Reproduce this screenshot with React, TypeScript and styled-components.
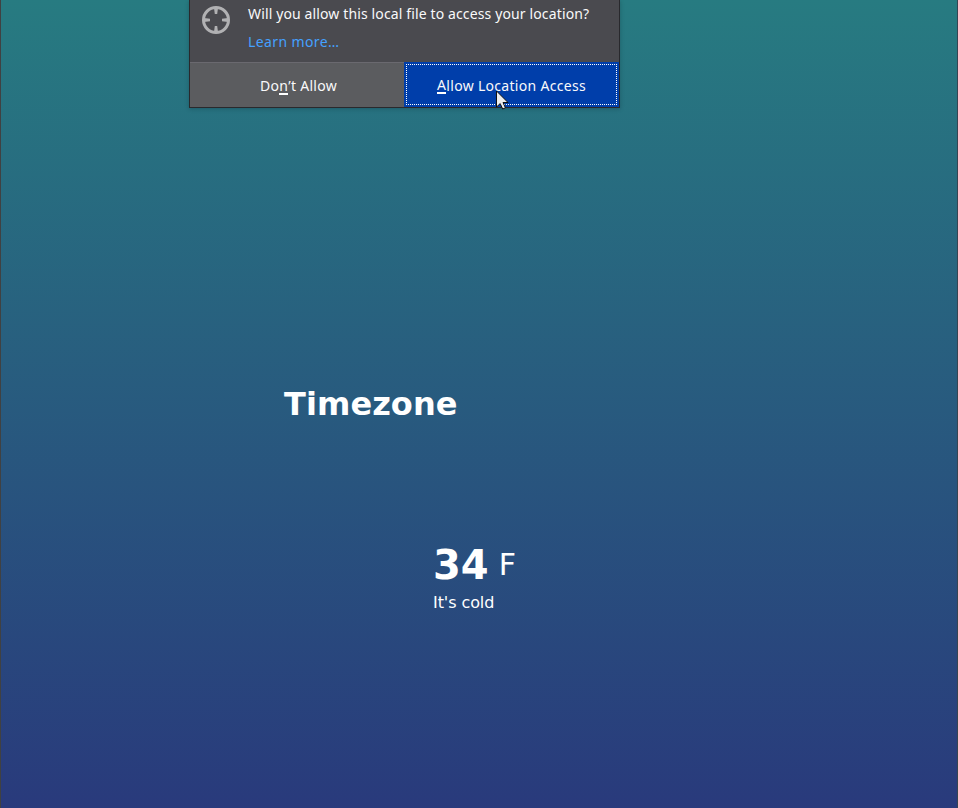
import React from "react";
import styled, { createGlobalStyle } from "styled-components";

const GlobalStyle = createGlobalStyle`
  * { box-sizing: border-box; }
  body { margin: 0; overflow: hidden; font-family: "DejaVu Sans", sans-serif; color: #fff; }
`;

const Page = styled.main`
  height: 808px;
  border-left: 1px solid #404142;
  border-right: 1px solid #354552;
  background: linear-gradient(#277b81, #293a7c);
`;

const Popup = styled.section`
  width: 431px;
  height: 108px;
  margin-left: 188px;
  border: 1px solid #29292d;
  border-top: 0;
  background: #4a4a4f;
  box-shadow: 0 1px 4px rgba(0, 20, 30, 0.25);
  font-family: "Noto Sans", sans-serif;
  font-size: 14px;
  color: #f9f9fa;
  display: flex;
  flex-direction: column;
`;

const Notice = styled.div`
  height: 62px;
  display: flex;
  padding-left: 12px;
  gap: 18px;
`;

const TargetIcon = styled.svg`
  width: 28px;
  height: 28px;
  margin-top: 6px;
  flex: none;
`;

const Message = styled.div`
  display: flex;
  flex-direction: column;
`;

const Line = styled.div<{ $spacing: number }>`
  height: 28px;
  line-height: 28px;
  white-space: nowrap;
  letter-spacing: ${(p) => p.$spacing}px;
`;

const LearnMore = styled(Line)`
  color: #45a1ff;
`;

const Actions = styled.div`
  height: 45px;
  display: grid;
  grid-template-columns: 214px 215px;
`;

const Button = styled.button<{ $primary?: boolean; $spacing: number }>`
  border: 0;
  border-top: 1px solid ${(p) => (p.$primary ? "#003eaa" : "#6a696f")};
  padding: ${(p) => (p.$primary ? "0 2px 1px" : "0 0 0 3px")};
  background: ${(p) => (p.$primary ? "#003eaa" : "#5b5c5f")};
  color: #f9f9fa;
  font: inherit;
  letter-spacing: ${(p) => p.$spacing}px;
  white-space: nowrap;
`;

const FocusRing = styled.span`
  display: flex;
  align-items: center;
  justify-content: center;
  height: 41px;
  padding-top: 2px;
  border: 1px dotted #fff;
`;

const AccessKey = styled.span`
  border-bottom: 2px solid #fff;
  display: inline-block;
  line-height: 15px;
  height: 17px;
`;

const Pointer = styled.svg`
  position: absolute;
  left: 496px;
  top: 90px;
  width: 14px;
  height: 20px;
`;

const Location = styled.div`
  height: 37px;
  margin: 278px 0 0 283px;
`;

const Timezone = styled.h1`
  margin: 0;
  font-size: 32px;
  line-height: 37px;
  letter-spacing: 0.08px;
`;

const Temperature = styled.div`
  margin: 118px 0 0 432px;
`;

const Degrees = styled.div`
  display: flex;
  align-items: center;
  gap: 10px;
  height: 47px;
`;

const Value = styled.h2`
  margin: 2px 0 0;
  font-size: 40px;
  line-height: 47px;
`;

const Unit = styled.span`
  font-size: 30px;
  line-height: 35px;
`;

const Description = styled.div`
  margin-top: 5px;
  font-size: 16px;
  line-height: 19px;
  letter-spacing: -0.08px;
`;

export default function App() {
  return (
    <>
      <GlobalStyle />
      <Page>
        <Popup>
          <Notice>
            <TargetIcon viewBox="0 0 28 28" fill="none" stroke="#b1b1b3" strokeWidth="3">
              <circle cx="14" cy="14" r="12.5" />
              <path
                d="M12 2h4l-.8 6h-2.4zM12 26h4l-.8-6h-2.4zM2 12v4l6-.8v-2.4zM26 12v4l-6-.8v-2.4z"
                fill="#b1b1b3"
                stroke="none"
              />
            </TargetIcon>
            <Message>
              <Line $spacing={0.13}>Will you allow this local file to access your location?</Line>
              <LearnMore $spacing={0.38}>Learn more…</LearnMore>
            </Message>
          </Notice>
          <Actions>
            <Button $spacing={0.28}>
              Do<AccessKey>n</AccessKey>’t Allow
            </Button>
            <Button $primary $spacing={0.3}>
              <FocusRing>
                <AccessKey>A</AccessKey>llow Location Access
              </FocusRing>
            </Button>
          </Actions>
        </Popup>
        <Location>
          <Timezone>Timezone</Timezone>
        </Location>
        <Temperature>
          <Degrees>
            <Value>34</Value>
            <Unit>F</Unit>
          </Degrees>
          <Description>It's cold</Description>
        </Temperature>
        <Pointer viewBox="0 0 14 20">
          <path d="M.5 1v16l3.7-3.4 2.5 5.4 2.7-1.2-2.4-5.3h5z" fill="#eee" stroke="#111" strokeWidth="1" />
        </Pointer>
      </Page>
    </>
  );
}
